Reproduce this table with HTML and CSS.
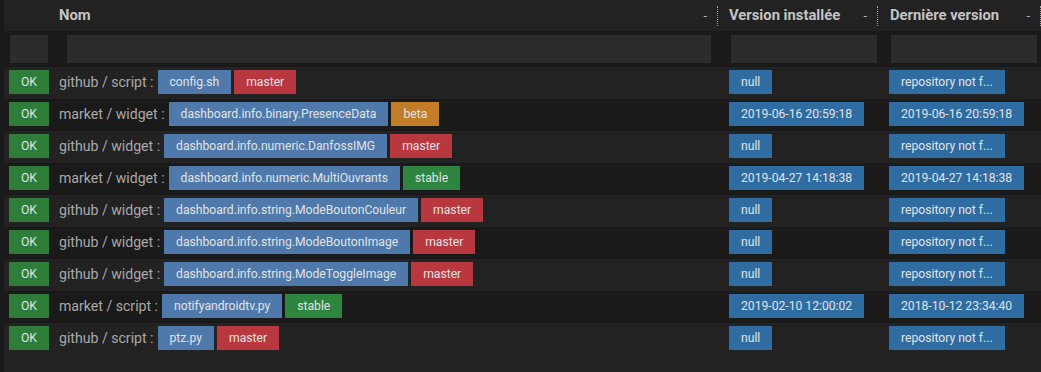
FILE: index.html
```html
<!DOCTYPE html>
<html lang="fr">
<head>
<meta charset="utf-8">
<title>Mises à jour</title>
<link rel="stylesheet" href="styles.css">
</head>
<body>
<div class="table">
  <div class="row head">
    <div class="cell"></div>
    <div class="cell th th-nom"><span>Nom</span><span class="sort">-</span></div>
    <div class="cell th th-v1"><span>Version installée</span><span class="sort">-</span></div>
    <div class="cell th th-v2"><span>Dernière version</span><span class="sort">-</span></div>
  </div>
  <div class="row filter">
    <div class="cell f1"><span class="input"></span></div>
    <div class="cell f2"><span class="input"></span></div>
    <div class="cell f3"><span class="input"></span></div>
    <div class="cell f4"><span class="input"></span></div>
  </div>

  <div class="row odd">
    <div class="cell c1"><span class="badge ok">OK</span></div>
    <div class="cell c2"><span class="label">github / script :</span><span class="badge name">config.sh</span><span class="badge red">master</span></div>
    <div class="cell c3"><span class="badge ver">null</span></div>
    <div class="cell c4"><span class="badge ver">repository not f...</span></div>
  </div>
  <div class="row even">
    <div class="cell c1"><span class="badge ok">OK</span></div>
    <div class="cell c2"><span class="label">market / widget :</span><span class="badge name">dashboard.info.binary.PresenceData</span><span class="badge orange">beta</span></div>
    <div class="cell c3"><span class="badge ver">2019-06-16 20:59:18</span></div>
    <div class="cell c4"><span class="badge ver">2019-06-16 20:59:18</span></div>
  </div>
  <div class="row odd">
    <div class="cell c1"><span class="badge ok">OK</span></div>
    <div class="cell c2"><span class="label">github / widget :</span><span class="badge name">dashboard.info.numeric.DanfossIMG</span><span class="badge red">master</span></div>
    <div class="cell c3"><span class="badge ver">null</span></div>
    <div class="cell c4"><span class="badge ver">repository not f...</span></div>
  </div>
  <div class="row even">
    <div class="cell c1"><span class="badge ok">OK</span></div>
    <div class="cell c2"><span class="label">market / widget :</span><span class="badge name">dashboard.info.numeric.MultiOuvrants</span><span class="badge green">stable</span></div>
    <div class="cell c3"><span class="badge ver">2019-04-27 14:18:38</span></div>
    <div class="cell c4"><span class="badge ver">2019-04-27 14:18:38</span></div>
  </div>
  <div class="row odd">
    <div class="cell c1"><span class="badge ok">OK</span></div>
    <div class="cell c2"><span class="label">github / widget :</span><span class="badge name">dashboard.info.string.ModeBoutonCouleur</span><span class="badge red">master</span></div>
    <div class="cell c3"><span class="badge ver">null</span></div>
    <div class="cell c4"><span class="badge ver">repository not f...</span></div>
  </div>
  <div class="row even">
    <div class="cell c1"><span class="badge ok">OK</span></div>
    <div class="cell c2"><span class="label">github / widget :</span><span class="badge name">dashboard.info.string.ModeBoutonImage</span><span class="badge red">master</span></div>
    <div class="cell c3"><span class="badge ver">null</span></div>
    <div class="cell c4"><span class="badge ver">repository not f...</span></div>
  </div>
  <div class="row odd">
    <div class="cell c1"><span class="badge ok">OK</span></div>
    <div class="cell c2"><span class="label">github / widget :</span><span class="badge name">dashboard.info.string.ModeToggleImage</span><span class="badge red">master</span></div>
    <div class="cell c3"><span class="badge ver">null</span></div>
    <div class="cell c4"><span class="badge ver">repository not f...</span></div>
  </div>
  <div class="row even">
    <div class="cell c1"><span class="badge ok">OK</span></div>
    <div class="cell c2"><span class="label">market / script :</span><span class="badge name">notifyandroidtv.py</span><span class="badge green">stable</span></div>
    <div class="cell c3"><span class="badge ver">2019-02-10 12:00:02</span></div>
    <div class="cell c4"><span class="badge ver">2018-10-12 23:34:40</span></div>
  </div>
  <div class="row odd">
    <div class="cell c1"><span class="badge ok">OK</span></div>
    <div class="cell c2"><span class="label">github / script :</span><span class="badge name">ptz.py</span><span class="badge red">master</span></div>
    <div class="cell c3"><span class="badge ver">null</span></div>
    <div class="cell c4"><span class="badge ver">repository not f...</span></div>
  </div>
</div>
</body>
</html>
```

FILE: styles.css
```css
html, body {
  margin: 0;
  padding: 0;
  background: #1a1a1a;
  height: 100%;
  overflow: hidden;
}
body {
  font-family: Roboto, "Liberation Sans", Arial, sans-serif;
  color: #a9a9a9;
}
.table {
  margin-left: 4px;
  width: 1037px;
  min-height: 372px;
  background: #222222;
}
.row {
  display: grid;
  grid-template-columns: 50px 664px 160px 163px;
}
.cell {
  display: flex;
  align-items: flex-start;
  min-width: 0;
}
.head {
  height: 31px;
  background: #222222;
}
.th {
  align-items: center;
  justify-content: space-between;
  font-weight: bold;
  font-size: 14.8px;
  color: #c4c4c4;
  position: relative;
  padding-bottom: 1px;
}
.th::after {
  content: "";
  position: absolute;
  right: 0;
  top: 6px;
  height: 20px;
  border-right: 1px dotted #a0a0a0;
}
.th-nom { padding-left: 5px; padding-right: 11px; }
.th-v1 { padding-left: 11px; padding-right: 11px; }
.th-v2 { padding-left: 12px; padding-right: 11px; }
.sort {
  font-weight: normal;
  font-size: 13px;
  color: #b0b0b0;
}
.filter {
  height: 36px;
  background: #1a1a1a;
}
.filter .cell { padding-top: 4px; }
.input {
  display: block;
  height: 28px;
  background: #2c2c2c;
}
.f1 { padding-left: 6px; }
.f1 .input { width: 38px; }
.f2 { padding-left: 13px; }
.f2 .input { width: 644px; }
.f3 { padding-left: 13px; }
.f3 .input { width: 146px; }
.f4 { padding-left: 13px; }
.f4 .input { width: 146px; }

.odd, .even { height: 32px; }
.odd { background: #222222; }
.even { background: #1a1a1a; }
.odd .cell, .even .cell { padding-top: 3px; }

.c1 { padding-left: 5px; }
.c2 { padding-left: 5px; gap: 3px; align-items: center; height: 24px; }
.c3 { padding-left: 11px; }
.c4 { padding-left: 11px; }

.label {
  font-size: 14.1px;
  color: #a9a9a9;
  margin-right: 1px;
  white-space: nowrap;
}
.badge {
  display: inline-block;
  height: 24px;
  line-height: 24px;
  padding: 0 12px;
  font-size: 12.15px;
  color: #e2e2e2;
  white-space: nowrap;
}
.ok {
  width: 40px;
  padding: 0;
  text-align: center;
  background: #2e7d3a;
}
.name { background: #4f79ab; }
.red { background: #b9373f; }
.orange { background: #c27d28; }
.green { background: #2e8540; }
.ver { background: #2f6ca2; }
```
